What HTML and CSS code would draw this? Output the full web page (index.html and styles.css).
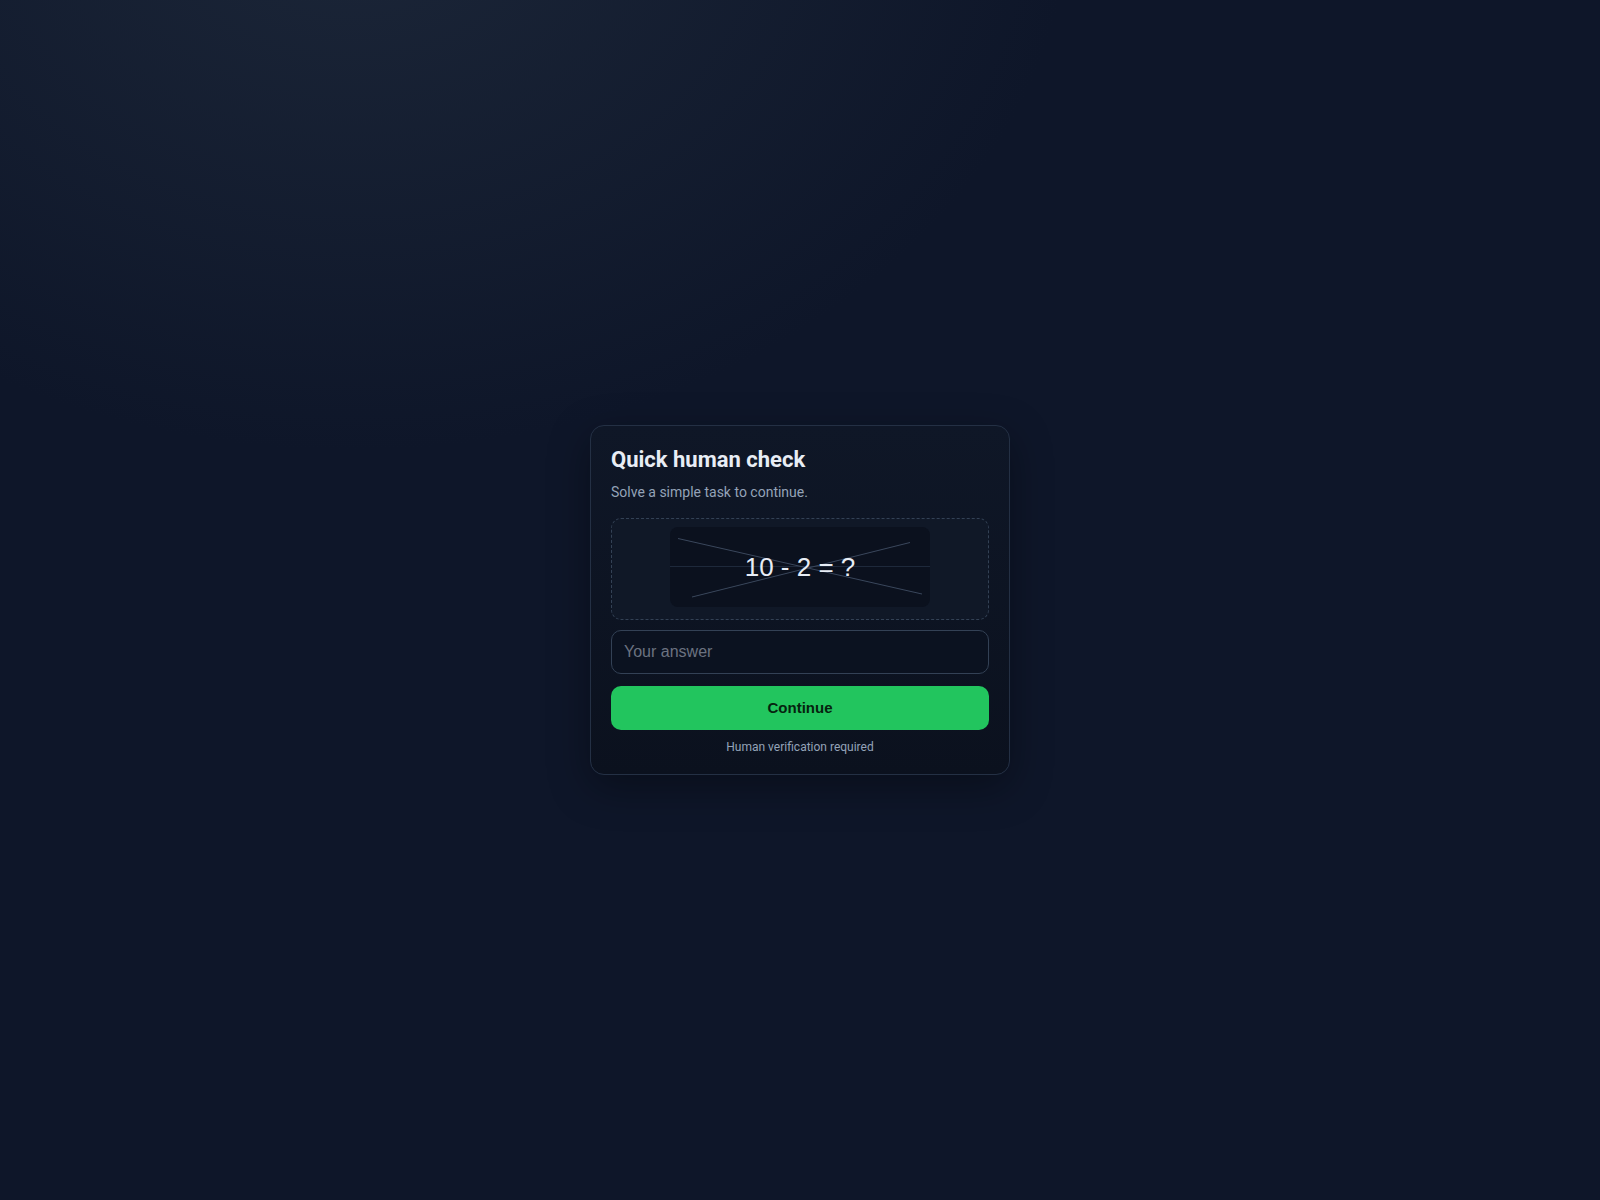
FILE: index.html
```html
<!DOCTYPE html>
<html lang="en">
<head>
<meta charset="utf-8">
<title>Quick human check</title>
<link rel="stylesheet" href="styles.css">
</head>
<body>
<main class="page">
  <section class="card">
    <h1 class="title">Quick human check</h1>
    <p class="subtitle">Solve a simple task to continue.</p>
    <div class="captcha-box">
      <svg class="captcha" width="260" height="80" viewBox="0 0 260 80" xmlns="http://www.w3.org/2000/svg">
        <rect x="0" y="0" width="260" height="80" rx="8" fill="#0b111e"/>
        <line x1="0" y1="39.5" x2="260" y2="39.5" stroke="#1e293b" stroke-width="1"/>
        <line x1="8" y1="11.5" x2="252" y2="67" stroke="#3a475c" stroke-width="1"/>
        <line x1="22" y1="70" x2="240" y2="15.5" stroke="#3a475c" stroke-width="1"/>
        <text x="130" y="49" text-anchor="middle" class="captcha-text">10 - 2 = ?</text>
      </svg>
    </div>
    <input class="answer" type="text" placeholder="Your answer">
    <button class="continue" type="button">Continue</button>
    <p class="footnote">Human verification required</p>
  </section>
</main>
</body>
</html>
```

FILE: styles.css
```css
* { box-sizing: border-box; }
html, body { margin: 0; height: 100%; }
body {
  background:
    radial-gradient(ellipse 1000px 760px at 22% -8%, rgba(30, 41, 59, 0.85) 0%, rgba(30, 41, 59, 0) 72%),
    #0e1629;
  font-family: Roboto, "Noto Sans", "Liberation Sans", sans-serif;
  color: #e5e7eb;
}
.page {
  min-height: 100vh;
  display: flex;
  align-items: center;
  justify-content: center;
}
.card {
  width: 420px;
  padding: 21px 20px 20px;
  border: 1px solid #243044;
  border-radius: 14px;
  background: linear-gradient(180deg, #0f1727 0%, #0b111e 100%);
  box-shadow: 0 12px 40px rgba(0, 0, 0, 0.35);
  display: flex;
  flex-direction: column;
}
.title {
  margin: 0;
  font-size: 22px;
  line-height: 26px;
  font-weight: 700;
  color: #e8edf5;
}
.subtitle {
  margin: 11px 0 17px;
  font-size: 14px;
  line-height: 17px;
  color: #94a3b8;
}
.captcha-box {
  border: 1px dashed #334155;
  border-radius: 10px;
  background: #101827;
  padding: 8px 8px 12px;
  display: flex;
  justify-content: center;
}
.captcha { display: block; }
.captcha-text {
  font-family: "Liberation Sans", Arial, sans-serif;
  font-size: 26px;
  fill: #e8edf5;
}
.answer {
  margin-top: 10px;
  height: 44px;
  width: 100%;
  padding: 0 12px;
  border: 1px solid #334155;
  border-radius: 10px;
  background: #0b1220;
  color: #e5e7eb;
  font-family: "Liberation Sans", Arial, sans-serif;
  font-size: 16px;
  outline: none;
}
.answer::placeholder { color: #6b7280; }
.continue {
  margin-top: 12px;
  height: 44px;
  width: 100%;
  border: 0;
  border-radius: 10px;
  padding: 0 0 2px;
  background: #22c55e;
  color: #06230f;
  font-family: "Liberation Sans", Arial, sans-serif;
  font-size: 15px;
  font-weight: 700;
  cursor: pointer;
}
.footnote {
  margin: 10px 0 0;
  font-size: 12px;
  line-height: 14px;
  text-align: center;
  color: #94a3b8;
}
```
